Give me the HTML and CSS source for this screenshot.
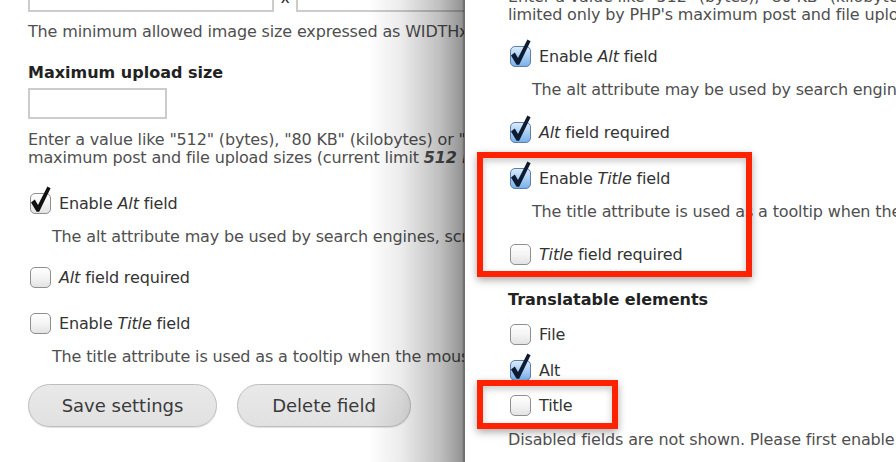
FILE: index.html
```html
<!DOCTYPE html>
<html lang="en">
<head>
<meta charset="utf-8">
<title>Image field settings</title>
<link rel="stylesheet" href="styles.css">
</head>
<body>
<div class="stage">
  <section class="back">
    <div class="dims">
      <span class="field field-wide"></span>
      <span class="times">x</span>
      <span class="field field-wide"></span>
    </div>
    <p class="desc first">The minimum allowed image size expressed as WIDTHxHEIGHT (e.g. 640x480). Leave empty for no restriction.</p>
    <h3 class="heading">Maximum upload size</h3>
    <span class="field field-small"></span>
    <p class="desc help">Enter a value like "512" (bytes), "80 KB" (kilobytes) or "50 MB" (megabytes) in order to restrict the allowed file size. If left empty the file sizes will be limited only by PHP's<br>maximum post and file upload sizes (current limit <em class="strong">512 MB</em>).</p>

    <div class="item">
      <svg class="cb" viewBox="0 0 26 30" aria-hidden="true"><use href="#box-plain"/><use href="#tick-black"/></svg>
      <span>Enable <em>Alt</em> field</span>
    </div>
    <p class="desc sub">The alt attribute may be used by search engines, screen readers, and when the image cannot be loaded.</p>
    <div class="item">
      <svg class="cb" viewBox="0 0 26 30" aria-hidden="true"><use href="#box-plain"/></svg>
      <span><em>Alt</em> field required</span>
    </div>
    <div class="item">
      <svg class="cb" viewBox="0 0 26 30" aria-hidden="true"><use href="#box-plain"/></svg>
      <span>Enable <em>Title</em> field</span>
    </div>
    <p class="desc sub">The title attribute is used as a tooltip when the mouse hovers over the image.</p>

    <div class="actions">
      <button class="btn btn-save" type="button">Save settings</button>
      <button class="btn btn-delete" type="button">Delete field</button>
    </div>
  </section>

  <section class="front">
    <p class="desc top">Enter a value like "512" (bytes), "80 KB" (kilobytes) or "50 MB" (megabytes) in order to restrict the allowed file size. If left empty the file sizes will be<br>limited only by PHP's maximum post and file upload sizes (current limit <em class="strong">512 MB</em>).</p>

    <div class="item">
      <svg class="cb" viewBox="0 0 26 30" aria-hidden="true"><use href="#box-blue"/><use href="#tick-navy"/></svg>
      <span>Enable <em>Alt</em> field</span>
    </div>
    <p class="desc sub">The alt attribute may be used by search engines, screen readers, and when the image cannot be loaded.</p>
    <div class="item">
      <svg class="cb" viewBox="0 0 26 30" aria-hidden="true"><use href="#box-blue"/><use href="#tick-navy"/></svg>
      <span><em>Alt</em> field required</span>
    </div>
    <div class="item">
      <svg class="cb" viewBox="0 0 26 30" aria-hidden="true"><use href="#box-blue"/><use href="#tick-navy"/></svg>
      <span>Enable <em>Title</em> field</span>
    </div>
    <p class="desc sub">The title attribute is used as a tooltip when the mouse hovers over the image.</p>
    <div class="item">
      <svg class="cb" viewBox="0 0 26 30" aria-hidden="true"><use href="#box-plain"/></svg>
      <span><em>Title</em> field required</span>
    </div>

    <h3 class="heading trans">Translatable elements</h3>
    <div class="item list">
      <svg class="cb" viewBox="0 0 26 30" aria-hidden="true"><use href="#box-plain"/></svg>
      <span>File</span>
    </div>
    <div class="item list">
      <svg class="cb" viewBox="0 0 26 30" aria-hidden="true"><use href="#box-blue"/><use href="#tick-navy"/></svg>
      <span>Alt</span>
    </div>
    <div class="item list">
      <svg class="cb" viewBox="0 0 26 30" aria-hidden="true"><use href="#box-plain"/></svg>
      <span>Title</span>
    </div>
    <p class="desc note">Disabled fields are not shown. Please first enable the fields above to make them translatable.</p>

    <div class="mark mark-a"></div>
    <div class="mark mark-b"></div>
  </section>
</div>

<svg class="defs" width="0" height="0" aria-hidden="true">
  <defs>
    <linearGradient id="g-plain" x1="0" y1="0" x2="0" y2="1">
      <stop offset="0" stop-color="#ffffff"/>
      <stop offset="0.5" stop-color="#f4f4f4"/>
      <stop offset="1" stop-color="#e2e2e2"/>
    </linearGradient>
    <linearGradient id="g-blue" x1="0" y1="0" x2="0" y2="1">
      <stop offset="0" stop-color="#dcebfb"/>
      <stop offset="0.5" stop-color="#a9cdf3"/>
      <stop offset="1" stop-color="#79b0ea"/>
    </linearGradient>
    <g id="box-plain">
      <rect x="2.5" y="8.5" width="20" height="20" rx="4.5" fill="url(#g-plain)" stroke="#8f8f8f" stroke-width="1"/>
    </g>
    <g id="box-blue">
      <rect x="2.5" y="8.5" width="20" height="20" rx="4.5" fill="url(#g-blue)" stroke="#5d7fa8" stroke-width="1"/>
    </g>
    <path id="tick-black" d="M3 17.4 L6.8 14.6 L10 20 L19.4 1.4 L22.6 3.2 L11.2 26.8 L8.6 26.8 Z" fill="#111111"/>
    <path id="tick-navy" d="M3 17.4 L6.8 14.6 L10 20 L19.4 1.4 L22.6 3.2 L11.2 26.8 L8.6 26.8 Z" fill="#0e1c33"/>
  </defs>
</svg>
</body>
</html>
```

FILE: styles.css
```css
html, body {
  margin: 0;
  padding: 0;
  background: #ffffff;
}

body {
  width: 896px;
  height: 462px;
  overflow: hidden;
  font-family: "DejaVu Sans", "Liberation Sans", sans-serif;
  font-size: 16px;
  letter-spacing: -0.15px;
  color: #333333;
}

.defs {
  position: absolute;
  width: 0;
  height: 0;
}

.stage {
  display: flex;
  height: 462px;
  overflow: hidden;
}

/* ---------- background screenshot ---------- */
.back {
  position: relative;
  flex: 0 0 464px;
  width: 464px;
  height: 462px;
  overflow: hidden;
  padding-left: 28px;
  box-sizing: border-box;
}

.back::after {
  content: "";
  position: absolute;
  top: 0;
  right: 0;
  width: 96px;
  height: 100%;
  background: linear-gradient(to right, rgba(0,0,0,0) 0%, rgba(0,0,0,0.08) 35%, rgba(0,0,0,0.25) 75%, rgba(0,0,0,0.42) 98%, rgba(0,0,0,0.6) 100%);
  pointer-events: none;
}

.dims {
  display: flex;
  align-items: flex-end;
  margin-top: -18px;
  height: 30px;
  white-space: nowrap;
}

.field {
  display: block;
  box-sizing: border-box;
  border: 2px solid #cccccc;
  background: #ffffff;
}

.field-wide {
  flex: none;
  width: 246px;
  height: 30px;
}

.times {
  flex: none;
  width: 22px;
  text-align: center;
  font-size: 15px;
  line-height: 18px;
  color: #222;
  margin-bottom: 5px;
}

.field-small {
  width: 139px;
  height: 31px;
  margin-top: 5px;
}

.desc {
  margin: 0;
  line-height: 18px;
  color: #4f4f4f;
  white-space: nowrap;
}

.desc.first {
  margin-top: 11px;
}

.desc.help {
  margin-top: 12px;
}

.strong {
  font-weight: bold;
}

.heading {
  margin: 22px 0 0;
  font-size: 16px;
  line-height: 20px;
  font-weight: bold;
  letter-spacing: 0;
  color: #222222;
  white-space: nowrap;
}

.item {
  display: flex;
  align-items: center;
  height: 26px;
  margin-top: 20px;
  white-space: nowrap;
  color: #333333;
}

.cb {
  flex: 0 0 26px;
  width: 26px;
  height: 30px;
  margin-right: 5px;
  margin-top: -7px;
}

.desc.sub {
  margin-top: 12px;
  margin-left: 24px;
}

.desc.help + .item {
  margin-top: 23px;
}

.desc.sub + .item {
  margin-top: 18px;
}

.item + .item {
  margin-top: 20px;
}

.actions {
  display: flex;
  gap: 20px;
  margin-top: 18px;
}

.btn {
  height: 43px;
  box-sizing: border-box;
  border: 1.5px solid #bdbdbd;
  border-radius: 22px;
  background: linear-gradient(#e9e9e9, #e1e1e1);
  font-family: "DejaVu Sans", "Liberation Sans", sans-serif;
  font-size: 18px;
  letter-spacing: 0;
  color: #3a3a3a;
  padding: 0;
  box-shadow: 0 1px 1px rgba(0,0,0,0.12);
}

.btn-save {
  width: 189px;
}

.btn-delete {
  width: 174px;
}

/* ---------- front screenshot ---------- */
.front {
  position: relative;
  flex: 1 1 auto;
  height: 462px;
  overflow: hidden;
  background: #ffffff;
  border-left: 1px solid #6e6e6e;
  padding-left: 43px;
  box-sizing: border-box;
}

.desc.top {
  margin-top: -12px;
}

.front .item:first-of-type {
  margin-top: 19px;
}

.front .desc.sub {
  margin-top: 12px;
}

.front .desc.sub + .item {
  margin-top: 20px;
}

.heading.trans {
  margin-top: 23px;
}

.item.list {
  margin-top: 10px;
}

.heading.trans + .item.list {
  margin-top: 11px;
}

.item.list + .item.list + .item.list {
  margin-top: 9px;
}

.desc.note {
  margin-top: 13px;
}

.mark {
  position: absolute;
  box-sizing: border-box;
  border: 6px solid #ff2200;
  box-shadow: 0 3px 8px rgba(0,0,0,0.35), inset 0 3px 7px rgba(0,0,0,0.22);
  pointer-events: none;
}

.mark-a {
  left: 12px;
  top: 152px;
  width: 275px;
  height: 125px;
}

.mark-b {
  left: 12px;
  top: 380px;
  width: 141px;
  height: 49px;
}
```
